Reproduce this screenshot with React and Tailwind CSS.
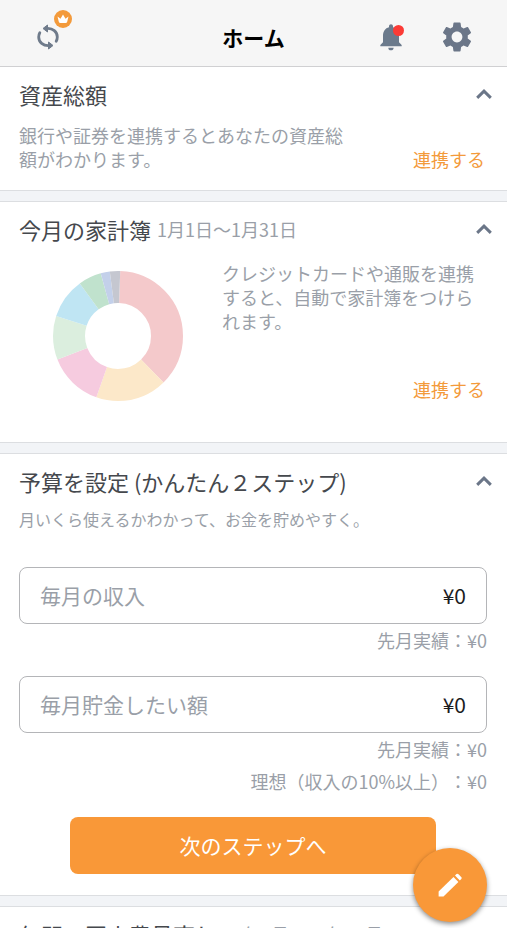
import { useState } from "react";
import { MdNotifications, MdSettings } from "react-icons/md";

const SLICES = [
  { color: "#f4c9cb", from: 2, to: 135.6 },
  { color: "#fce8c9", from: 135.6, to: 199.5 },
  { color: "#f6cbdf", from: 199.5, to: 248.7 },
  { color: "#dbeede", from: 248.7, to: 288 },
  { color: "#bfe5f3", from: 288, to: 324 },
  { color: "#c0e2cd", from: 324, to: 344.5 },
  { color: "#c3d0ea", from: 344.5, to: 352.7 },
  { color: "#c5c7d0", from: 352.7, to: 362 },
];

const SyncIcon = () => (
  <svg viewBox="0 0 24 28" className="h-7 w-6" fill="none" aria-hidden="true">
    <g stroke="#6f7b8b" strokeWidth="2.8" strokeLinecap="round">
      <path d="M10.500 5.400C17 4.800 21.300 9 21.300 14c0 1.600-.4 3-1.100 4.200" />
      <path d="M13.500 22.600C7 23.200 2.700 19 2.700 14c0-1.600.4-3 1.100-4.200" />
    </g>
    <path
      d="M7 5.500 11.500 2v7zM17 22.500 12.500 26v-7z"
      fill="#6f7b8b"
      stroke="#6f7b8b"
      strokeLinejoin="round"
    />
  </svg>
);

const CrownIcon = () => (
  <svg viewBox="0 0 12 10" className="h-[10px] w-3" fill="#fff" aria-hidden="true">
    <path d="M.5 2.500 3.500 4.800 6 .5l2.500 4.300 3-2.300-1.300 5.300q-.4 1.200-1.600 1.200H3.400Q2.200 9 1.800 7.800z" />
  </svg>
);

const PencilIcon = () => (
  <svg viewBox="0 0 24 24" className="size-6" fill="#fff" aria-hidden="true">
    <path d="M.6 23.400v-4.900L15.500 4l4.900 4.900L5.500 23.400z" />
    <path d="m17 2.600 1.500-1.500q1-.8 2 .1l2.700 2.700q.9 1 .1 2L21.800 7.400z" />
  </svg>
);

const DonutChart = () => (
  <svg viewBox="0 0 130 130" className="size-[130px]" role="img" aria-label="支出の内訳">
    <g transform="rotate(-90 65 65)">
      {SLICES.map(({ color, from, to }) => (
        <circle
          key={color}
          cx="65"
          cy="65"
          r="49"
          fill="none"
          stroke={color}
          strokeWidth="32"
          pathLength="360"
          strokeDasharray={`${to - from} ${360 - (to - from)}`}
          strokeDashoffset={-from}
        />
      ))}
    </g>
  </svg>
);

const Chevron = ({ open }) => (
  <svg
    viewBox="0 0 16 10"
    className={open ? "h-[10px] w-4" : "h-[10px] w-4 rotate-180"}
    fill="none"
    stroke="#6b7688"
    strokeWidth="3"
    aria-hidden="true"
  >
    <path d="M1.200 8.800 8 2.200l6.800 6.600" />
  </svg>
);

const Section = ({ title, period, children }) => {
  const [open, setOpen] = useState(true);

  return (
    <section className="border-y border-[#dcdee1] bg-white pt-[11px] first:border-t-0">
      <div className="flex items-center justify-between pr-[15px] pl-[19px]">
        <h2 className="flex items-center gap-1.5 text-[22px] leading-8 text-[#45484d]">
          {title}
          {period && <span className="text-lg leading-8 text-[#9a9fa8]">{period}</span>}
        </h2>
        <button
          type="button"
          aria-label={open ? "閉じる" : "開く"}
          aria-expanded={open}
          onClick={() => setOpen(!open)}
        >
          <Chevron open={open} />
        </button>
      </div>
      {open && children}
    </section>
  );
};

const AmountField = ({ id, label, notes }) => {
  const [amount, setAmount] = useState("¥0");

  return (
    <div>
      <div className="flex h-[57px] items-center rounded-lg border border-[#b4b5b8] px-5">
        <label htmlFor={id} className="shrink-0 text-[21px] text-[#9a9fa8]">
          {label}
        </label>
        <input
          id={id}
          inputMode="numeric"
          value={amount}
          onChange={(e) => setAmount(e.target.value)}
          className="min-w-0 flex-1 bg-transparent text-right text-[21px] text-[#1c1c1e] outline-none"
        />
      </div>
      <div className="text-right text-lg leading-8 text-[#9a9fa8]">
        {notes.map((note) => (
          <p key={note}>{note}</p>
        ))}
      </div>
    </div>
  );
};

const App = () => {
  return (
    <div className="flex h-screen flex-col overflow-hidden bg-[#f2f4f7] font-['Noto_Sans_CJK_JP',sans-serif] [text-spacing-trim:space-all]">
      <header className="grid shrink-0 grid-cols-3 items-center border-b border-[#d0d0d2] bg-[#f6f6f6] px-8 pt-[9px] pb-px">
        <button type="button" aria-label="更新" className="relative flex h-14 w-8 items-center justify-center">
          <SyncIcon />
          <span className="absolute top-px -right-2 flex size-[18px] items-center justify-center rounded-full bg-[#f39a3b]">
            <CrownIcon />
          </span>
        </button>
        <h1 className="text-center text-[21px] leading-8 font-bold text-black">ホーム</h1>
        <div className="flex items-center justify-end gap-8">
          <button type="button" aria-label="お知らせ" className="relative">
            <MdNotifications className="size-8 text-[#6b7a8c]" />
            <span className="absolute top-1 right-[3px] size-[11px] rounded-full bg-[#fb3b36]" />
          </button>
          <button type="button" aria-label="設定">
            <MdSettings className="size-9 text-[#6b7688]" />
          </button>
        </div>
      </header>

      <main className="flex flex-1 flex-col gap-[10px] overflow-y-auto">
        <Section title="資産総額">
          <div className="flex items-end justify-between pt-[13px] pr-[22px] pb-[19px] pl-[19px]">
            <p className="w-[330px] text-lg leading-6 text-[#9a9fa8]">
              銀行や証券を連携するとあなたの資産総額がわかります。
            </p>
            <a href="#assets" className="shrink-0 text-lg leading-6 text-[#f39a3b]">
              連携する
            </a>
          </div>
        </Section>

        <Section title="今月の家計簿" period="1月1日〜1月31日">
          <div className="flex justify-between pt-4 pr-[22px] pb-[41px] pl-[53px]">
            <div className="pt-[10px]">
              <DonutChart />
            </div>
            <div className="flex w-[263px] flex-col justify-between">
              <p className="text-lg leading-6 text-[#9a9fa8]">
                クレジットカードや通販を連携すると、自動で家計簿をつけられます。
              </p>
              <a href="#accounts" className="self-end text-lg leading-6 text-[#f39a3b]">
                連携する
              </a>
            </div>
          </div>
        </Section>

        <Section title="予算を設定 (かんたん２ステップ)">
          <div className="pt-2 pr-5 pb-[21px] pl-[19px]">
            <p className="text-base leading-7 text-[#9a9fa8]">
              月いくら使えるかわかって、お金を貯めやすく。
            </p>
            <form className="flex flex-col gap-5 pt-[34px]" onSubmit={(e) => e.preventDefault()}>
              <AmountField id="income" label="毎月の収入" notes={["先月実績：¥0"]} />
              <AmountField
                id="saving"
                label="毎月貯金したい額"
                notes={["先月実績：¥0", "理想（収入の10%以上）：¥0"]}
              />
              <button
                type="submit"
                className="mx-[51px] h-[57px] rounded-lg bg-[#f99838] text-[21px] text-white"
              >
                次のステップへ
              </button>
            </form>
          </div>
        </Section>

        <Section title="年間の固定費見直し" period="24年1月〜24年12月" />
      </main>

      <button
        type="button"
        aria-label="入力"
        className="fixed right-5 bottom-1.5 flex size-[74px] items-center justify-center rounded-full bg-[#f99838] shadow-[0_2px_5px_rgba(0,0,0,0.45)]"
      >
        <PencilIcon />
      </button>
    </div>
  );
};

export default App;
